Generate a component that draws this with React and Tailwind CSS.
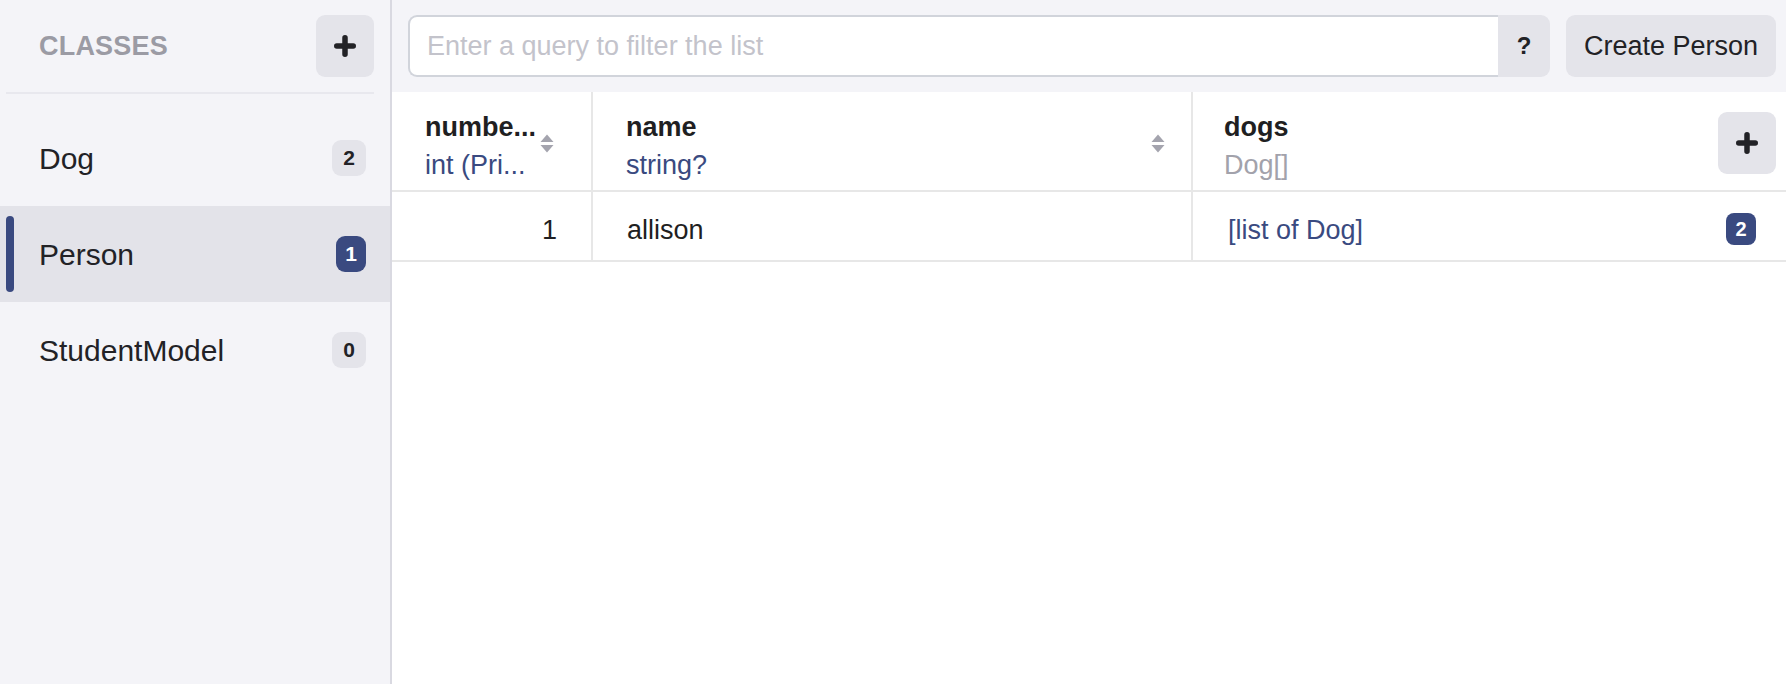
import React, { useState } from 'react';

const classes = [
  { name: 'Dog', count: 2 },
  { name: 'Person', count: 1 },
  { name: 'StudentModel', count: 0 },
];

const PlusIcon = () => (
  <svg width="22" height="22" viewBox="0 0 22 22" fill="none">
    <path d="M11 2.75V19.25M2.75 11H19.25" stroke="#222226" strokeWidth="5.5" strokeLinecap="round" />
  </svg>
);

const SortIcon = () => (
  <svg width="14" height="19" viewBox="0 0 14 19" className="shrink-0">
    <path d="M0.5 8L7 0.5L13.5 8Z" fill="#a4a4ae" />
    <path d="M0.5 11H13.5L7 18.5Z" fill="#a4a4ae" />
  </svg>
);

const Sidebar = ({ selected, onSelect }) => (
  <div className="w-[392px] shrink-0 border-r-2 border-[#d9d9e1] bg-[#f4f4f8] flex flex-col">
    <div className="h-[92px] flex items-center justify-between pl-[39px] pr-[16px]">
      <span className="text-[27px] font-bold text-[#9b9ba4] tracking-[0.2px]">CLASSES</span>
      <button className="w-[58px] h-[62px] rounded-[9px] bg-[#e4e4ea] flex items-center justify-center">
        <PlusIcon />
      </button>
    </div>
    <div className="h-[2px] bg-[#e8e8ee] ml-[6px] mr-[16px]" />
    <div className="pt-[16px]">
      {classes.map((c) => {
        const active = c.name === selected;
        return (
          <div
            key={c.name}
            onClick={() => onSelect(c.name)}
            className={`relative h-[96px] flex items-center justify-between pl-[39px] pr-[24px] cursor-pointer ${
              active ? 'bg-[#e3e3e9]' : ''
            }`}
          >
            {active && (
              <span className="absolute left-[6px] top-[10px] bottom-[10px] w-[8px] rounded-full bg-[#3a4a80]" />
            )}
            <span className="text-[30px] text-[#222226]">{c.name}</span>
            <span
              className={`h-[36px] rounded-[9px] flex items-center justify-center text-[21px] font-bold ${
                active ? 'w-[30px] bg-[#3a4a80] text-white' : 'w-[34px] bg-[#e4e4ea] text-[#222226]'
              }`}
            >
              {c.count}
            </span>
          </div>
        );
      })}
    </div>
  </div>
);

const TopBar = () => (
  <div className="h-[92px] bg-[#f4f4f8] flex items-center pl-[16px] pr-[10px] gap-[16px]">
    <div className="flex flex-1 h-[62px]">
      <input
        className="flex-1 h-full border-2 border-r-0 border-[#d1d4db] rounded-l-[9px] bg-white pl-[17px] text-[27px] text-[#222226] placeholder:text-[#c3c3cb] outline-none"
        placeholder="Enter a query to filter the list"
      />
      <button className="w-[52px] h-full bg-[#e4e4ea] rounded-r-[9px] text-[24px] font-bold text-[#222226]">?</button>
    </div>
    <button className="w-[210px] h-[62px] rounded-[9px] bg-[#e4e4ea] text-[27px] text-[#222226]">Create Person</button>
  </div>
);

const HeaderCell = ({ title, type, width, children }) => (
  <div className={`${width} h-[100px] border-b-2 border-[#e7e7e7] flex items-start pl-[33px] pr-[32px] pt-[16px]`}>
    <div className="flex flex-col leading-[38px] min-w-0">
      <span className="text-[27px] font-bold text-[#1f1f22] whitespace-nowrap">{title}</span>
      <span className="text-[27px] whitespace-nowrap text-[#3a4a80]">{type}</span>
    </div>
    {children}
  </div>
);

const Table = () => (
  <div className="flex flex-col">
    <div className="flex">
      <HeaderCell title="numbe..." type="int (Pri..." width="w-[201px] border-r-2 border-r-[#e7e7e7]">
        <div className="ml-[4px] mt-[26px]">
          <SortIcon />
        </div>
      </HeaderCell>
      <HeaderCell title="name" type="string?" width="w-[600px] border-r-2 border-r-[#e7e7e7] justify-between">
        <div className="mt-[26px] mr-[-6px]">
          <SortIcon />
        </div>
      </HeaderCell>
      <div className="flex-1 h-[100px] border-b-2 border-[#e7e7e7] flex items-start justify-between pl-[31px] pr-[10px] pt-[16px]">
        <div className="flex flex-col leading-[38px]">
          <span className="text-[27px] font-bold text-[#1f1f22]">dogs</span>
          <span className="text-[27px] text-[#a2a2ab]">Dog[]</span>
        </div>
        <button className="w-[58px] h-[62px] mt-[4px] rounded-[9px] bg-[#e4e4ea] flex items-center justify-center">
          <PlusIcon />
        </button>
      </div>
    </div>
    <div className="flex h-[70px] border-b-2 border-[#e7e7e7]">
      <div className="w-[201px] border-r-2 border-[#e7e7e7] flex items-center justify-end pr-[34px]">
        <span className="text-[27px] leading-[38px] pt-2 text-[#1f1f22]">1</span>
      </div>
      <div className="w-[600px] border-r-2 border-[#e7e7e7] flex items-center pl-[34px]">
        <span className="text-[27px] leading-[38px] pt-2 text-[#1f1f22]">allison</span>
      </div>
      <div className="flex-1 flex items-center justify-between pl-[35px] pr-[30px]">
        <span className="text-[27px] leading-[38px] pt-2 text-[#3a4a80]">[list of Dog]</span>
        <span className="w-[30px] h-[32px] mt-[6px] rounded-[8px] bg-[#3a4a80] text-white text-[20px] font-bold flex items-center justify-center">
          2
        </span>
      </div>
    </div>
  </div>
);

const App = () => {
  const [selected, setSelected] = useState('Person');

  return (
    <div className="flex h-[684px] w-full bg-white font-['Liberation_Sans',Arial,sans-serif] overflow-hidden">
      <Sidebar selected={selected} onSelect={setSelected} />
      <div className="flex-1 flex flex-col min-w-0">
        <TopBar />
        <Table />
      </div>
    </div>
  );
};

export default App;
